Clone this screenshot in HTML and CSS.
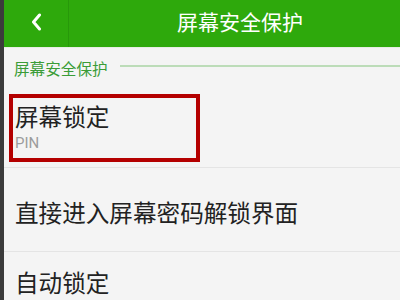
FILE: index.html
```html
<!DOCTYPE html>
<html lang="zh-CN">
<head>
    <meta charset="UTF-8">
    <meta name="viewport" content="width=device-width, initial-scale=1.0">
    <title>屏幕安全保护</title>
    <link rel="stylesheet" href="styles.css">
</head>
<body>
    <div class="page">
        <div class="edge"></div>
        <div class="screen">
            <header class="header">
                <div class="back">
                    <svg width="16" height="18" viewBox="0 0 16 18">
                        <path d="M11.5 2 L5.5 9 L11.5 16" fill="none" stroke="#fff" stroke-width="3" stroke-linecap="round" stroke-linejoin="round"/>
                    </svg>
                </div>
                <h1 class="title">屏幕安全保护</h1>
            </header>

            <div class="section">
                <span class="section-label">屏幕安全保护</span>
                <span class="section-line"></span>
            </div>

            <div class="item item-first">
                <div class="item-title">屏幕锁定</div>
                <div class="item-sub">PIN</div>
            </div>
            <div class="item item-second">
                <div class="item-title">直接进入屏幕密码解锁界面</div>
            </div>
            <div class="item item-third">
                <div class="item-title">自动锁定</div>
            </div>
        </div>

        <div class="highlight"></div>
    </div>
</body>
</html>
```

FILE: styles.css
```css
body {
    margin: 0;
    font-family: "Noto Sans CJK SC", "Noto Sans", sans-serif;
    background-color: #f4f4f4;
}

.page {
    position: relative;
    display: flex;
    width: 400px;
    height: 300px;
    overflow: hidden;
}

.edge {
    width: 4px;
    background-color: #3b3b3b;
}

.screen {
    flex: 1;
    background-color: #f4f4f4;
}

.header {
    display: flex;
    height: 47px;
    background-color: #2ea90c;
    border-bottom: 1px solid #e6eee4;
}

.back {
    width: 64px;
    display: flex;
    align-items: center;
    justify-content: center;
    padding-bottom: 3px;
    border-right: 1px solid #27990a;
}

.title {
    flex: 1;
    margin: 0;
    padding-left: 11px;
    padding-bottom: 6px;
    display: flex;
    align-items: center;
    justify-content: center;
    color: #fff;
    font-size: 21px;
    font-weight: normal;
}

.section {
    display: flex;
    align-items: center;
    height: 39px;
    padding-left: 10px;
}

.section-label {
    color: #3a9c37;
    font-size: 15.6px;
    line-height: 20px;
    padding-top: 1px;
}

.section-line {
    flex: 1;
    height: 2px;
    margin-left: 12px;
    margin-top: -3px;
    background-color: #bcdcb8;
}

.item {
    padding-left: 11px;
    color: #222;
}

.item-title {
    font-size: 23.6px;
    line-height: 28px;
}

.item-sub {
    margin-top: 3px;
    font-family: "Roboto", "Noto Sans", sans-serif;
    font-size: 15px;
    line-height: 20px;
    color: #9c9c9c;
}

.item-first {
    padding-top: 15px;
    padding-bottom: 14px;
}

.item-second {
    border-top: 1px solid #e4e4e4;
    padding-top: 30px;
    padding-bottom: 25px;
}

.item-third {
    border-top: 1px solid #e4e4e4;
    padding-top: 16px;
}

.highlight {
    position: absolute;
    left: 9px;
    top: 94px;
    width: 191px;
    height: 68px;
    box-sizing: border-box;
    border: 4px solid #b40000;
}
```
